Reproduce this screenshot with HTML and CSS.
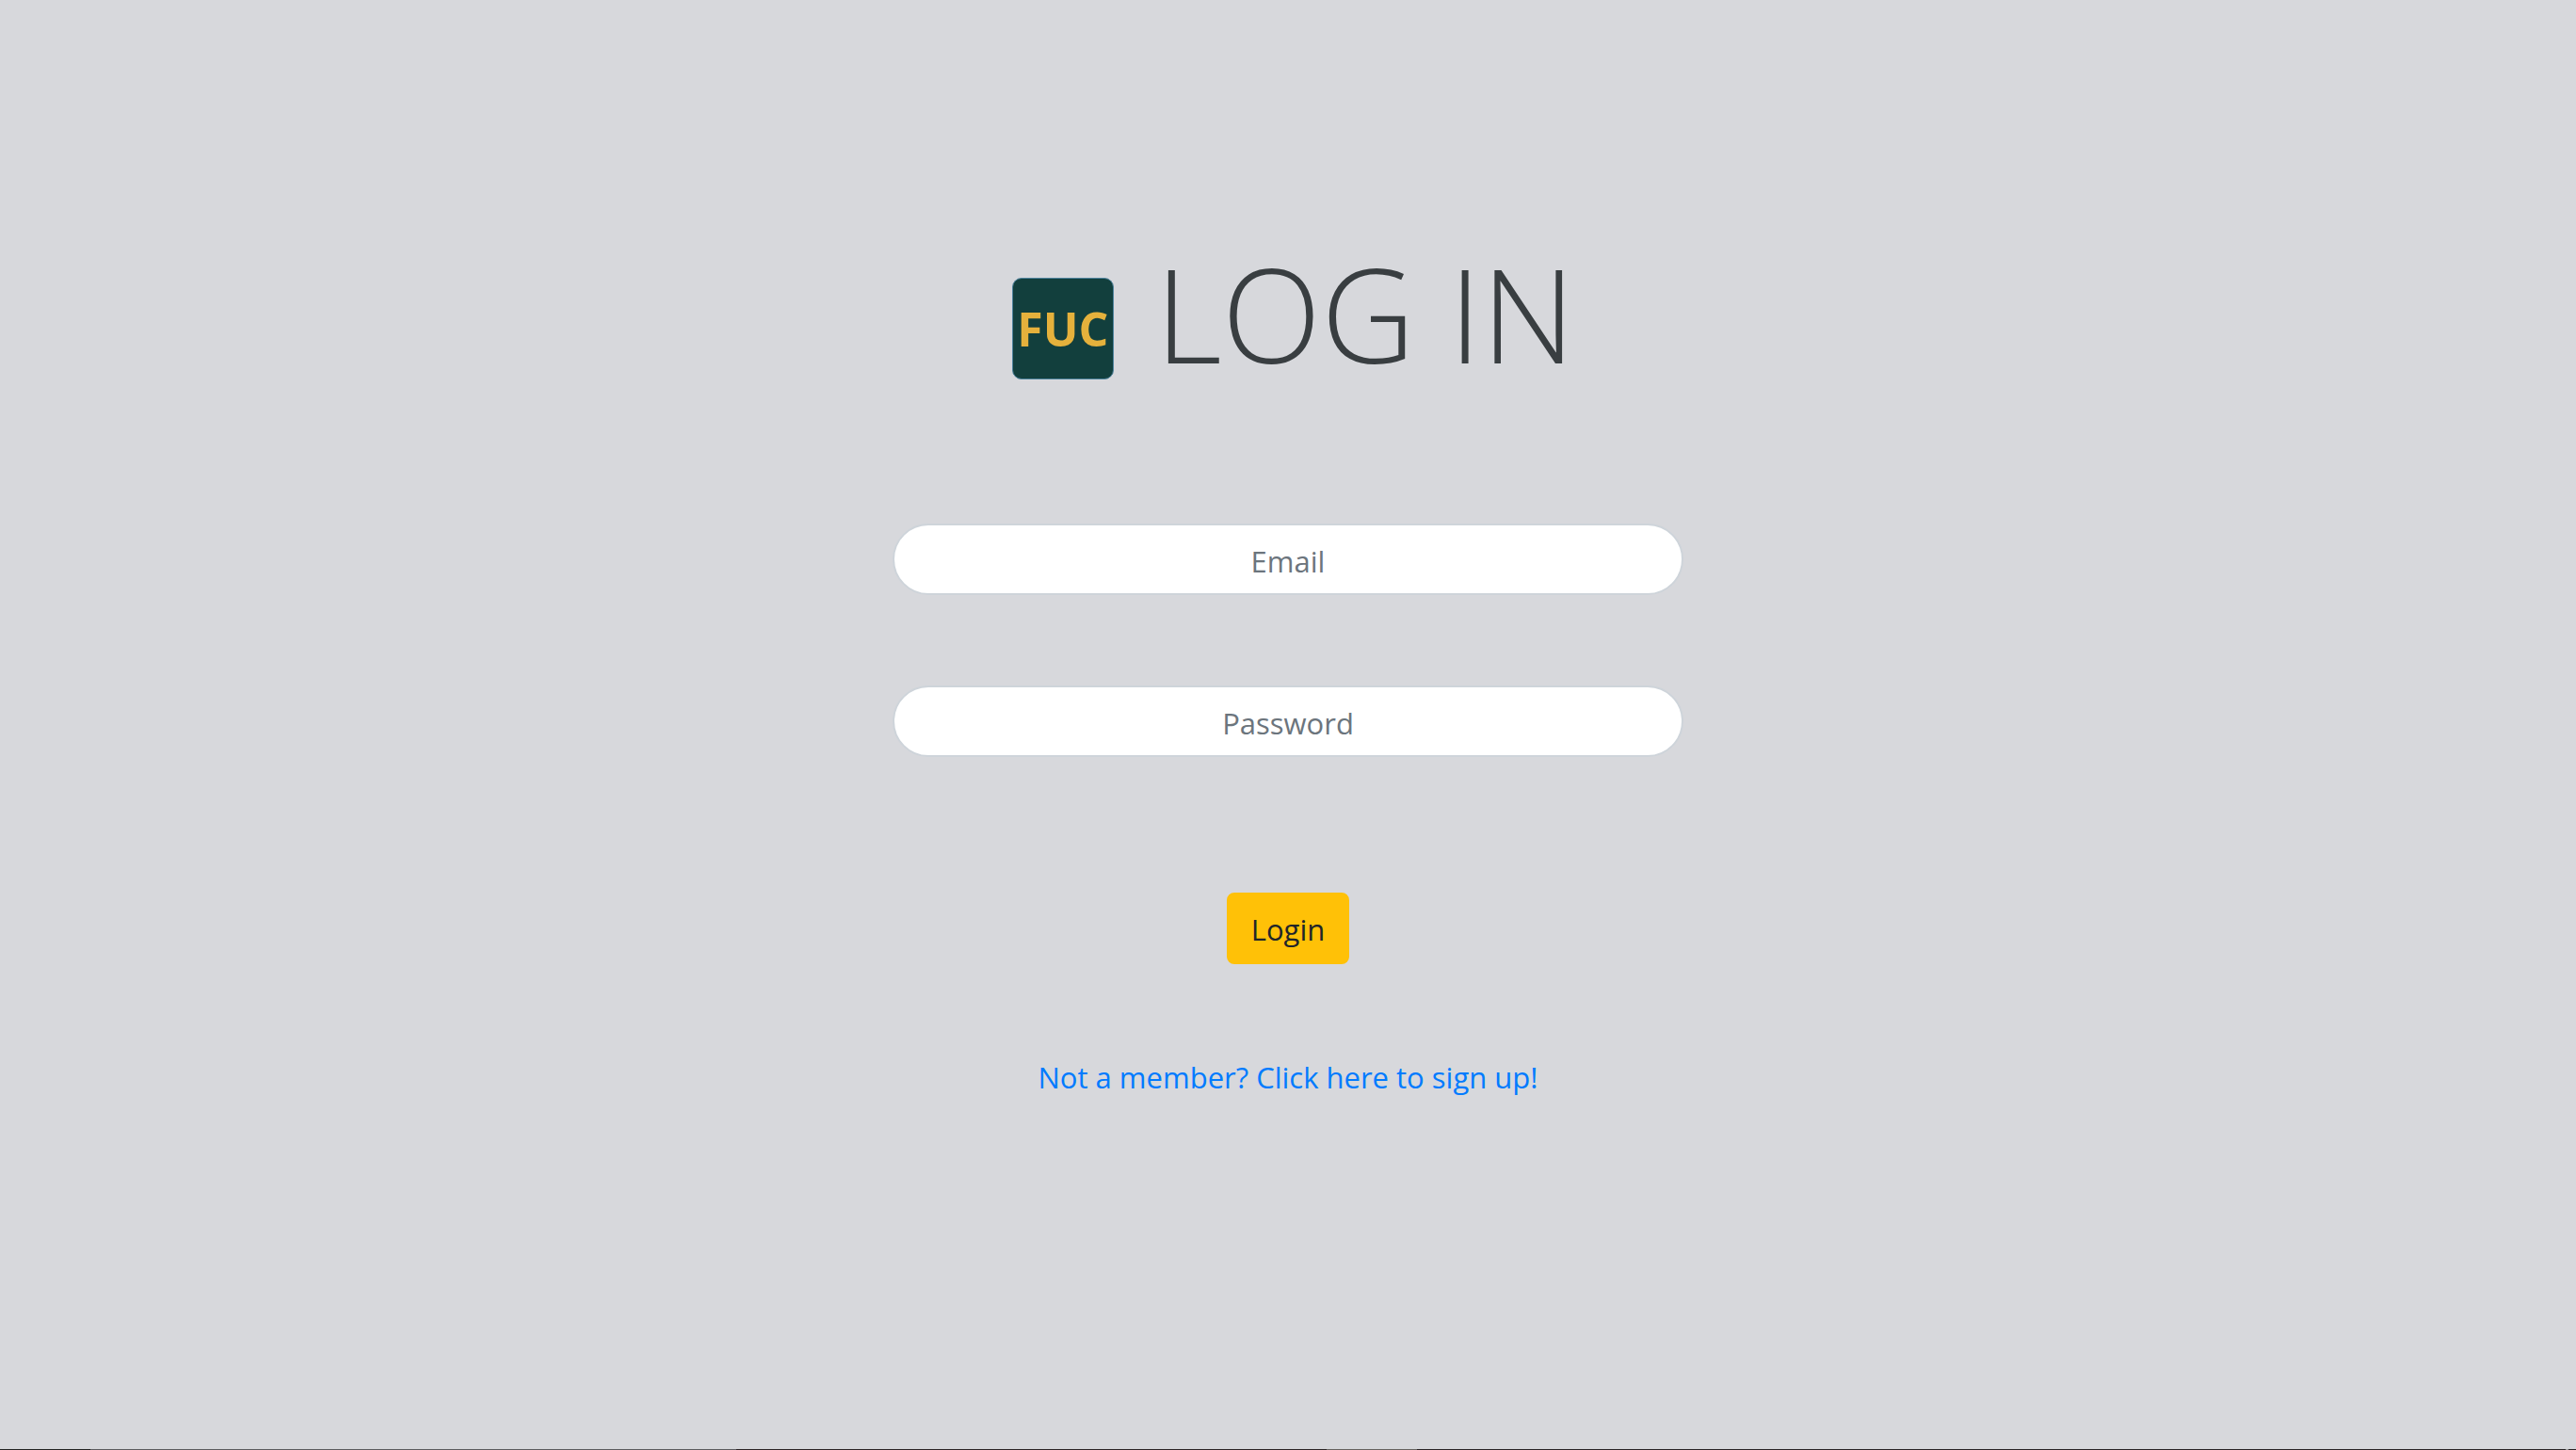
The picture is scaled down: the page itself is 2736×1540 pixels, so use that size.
FILE: index.html
```html
<!DOCTYPE html>
<html lang="en">
<head>
  <meta charset="utf-8">
  <meta name="viewport" content="width=device-width, initial-scale=1">
  <title>Log in</title>
  <link rel="stylesheet" href="styles.css">
</head>
<body>
  <main class="login">
    <header class="brand">
      <span class="logo">FUC</span>
      <h1 class="title">LOG IN</h1>
    </header>
    <form class="form">
      <input class="field" type="email" name="email" placeholder="Email" aria-label="Email">
      <input class="field" type="password" name="password" placeholder="Password" aria-label="Password">
      <button class="submit" type="submit">Login</button>
    </form>
    <a class="signup" href="#signup">Not a member? Click here to sign up!</a>
  </main>
  <footer class="edge"></footer>
</body>
</html>
```
FILE: styles.css
```css
* {
  box-sizing: border-box;
}

body {
  margin: 0;
  min-height: 100vh;
  display: flex;
  flex-direction: column;
  background: #d7d8dc;
  color: #212529;
  font-family: "Open Sans", "Noto Sans", sans-serif;
  font-size: 31px;
  line-height: 48px;
}

.login {
  flex: 1;
  width: 100%;
  max-width: 840px;
  margin: 0 auto;
  padding-top: 248px;
  display: flex;
  flex-direction: column;
  align-items: center;
}

.brand {
  display: flex;
  align-items: center;
  gap: 44px;
  padding-left: 12px;
}

.logo {
  display: flex;
  align-items: center;
  justify-content: center;
  width: 108px;
  height: 108px;
  margin-top: 34px;
  border: 1px solid #4d829c;
  border-radius: 10px;
  background: #123f3d;
  color: #e5b13c;
  font-size: 50px;
  font-weight: 700;
}

.title {
  margin: 0;
  color: #393e41;
  font-size: 138px;
  font-weight: 300;
  line-height: 168px;
}

.form {
  width: 100%;
  margin-top: 140px;
  display: flex;
  flex-direction: column;
  align-items: center;
  gap: 96px;
}

.field {
  width: 100%;
  height: 76px;
  padding: 4px 24px 0;
  border: 2px solid #ced4da;
  border-radius: 40px;
  background: #fff;
  color: #495057;
  font: inherit;
  text-align: center;
}

.field::placeholder {
  color: #6c757d;
  opacity: 1;
}

.submit {
  height: 76px;
  margin-top: 48px;
  padding: 2px 24px 0;
  border: 2px solid #ffc107;
  border-radius: 8px;
  background: #ffc107;
  color: #212529;
  font: inherit;
}

.signup {
  margin-top: 96px;
  color: #007bff;
  text-decoration: none;
}

.edge {
  height: 1px;
  background: linear-gradient(to right, #222 3.5%, #5b5b5e 3.5% 28.6%, #2b2525 28.6% 51.5%, #66625f 51.5% 55%, #292425 55% 99.6%, #999 99.6% 99.7%, #292425 99.7%);
}
```
